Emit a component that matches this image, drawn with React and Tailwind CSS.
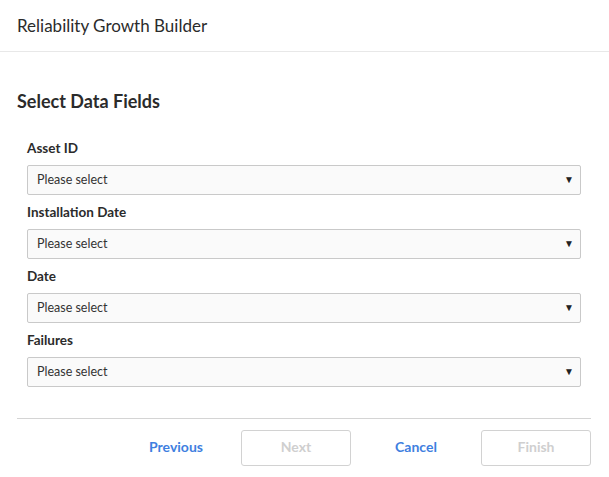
import React from 'react';

const fields = ['Asset ID', 'Installation Date', 'Date', 'Failures'];

function SelectField({ label }) {
  return (
    <div className="flex flex-col">
      <label className="h-[18px] text-[13.5px] leading-[18px] font-bold text-[#2b2b2b]">{label}</label>
      <div className="mt-[8px] flex h-[30px] items-center justify-between rounded-[2px] border border-[#c9c9c9] bg-[#fafafa] pl-[9px] pr-[6px]">
        <span className="text-[12.5px] text-[#333]">Please select</span>
        <span className="pb-[2px] text-[10px] leading-none text-[#222]">▼</span>
      </div>
    </div>
  );
}

export default function App() {
  return (
    <div className="h-[477px] w-[609px] bg-white text-[#333]" style={{ fontFamily: 'Lato, "Noto Sans", sans-serif' }}>
      <header className="flex h-[52px] items-center border-b border-[#e8e8e8] px-[17px]">
        <h1 className="text-[17px] text-[#2b2b2b]">Reliability Growth Builder</h1>
      </header>

      <div className="px-[17px]">
        <h2 className="mt-[38px] text-[18px] font-bold leading-[22px] text-[#2b2b2b]">Select Data Fields</h2>

        <div className="mt-[27px] flex flex-col gap-[8px] pl-[10px] pr-[11px]">
          {fields.map((f) => (
            <SelectField key={f} label={f} />
          ))}
        </div>

        <div className="mt-[31px] mr-[1px] border-t border-[#d4d4d4]" />

        <div className="mt-[11px] mr-[1px] flex justify-end gap-[10px]">
          <button type="button" className="h-[36px] w-[110px] pb-[3px] text-[14px] font-bold text-[#3f7fe0]">
            Previous
          </button>
          <button type="button" disabled className="h-[36px] w-[110px] rounded-[3px] border border-[#d2d2d2] pb-[3px] text-[14px] font-bold text-[#cfcfcf]">
            Next
          </button>
          <button type="button" className="h-[36px] w-[110px] pb-[3px] text-[14px] font-bold text-[#3f7fe0]">
            Cancel
          </button>
          <button type="button" disabled className="h-[36px] w-[110px] rounded-[3px] border border-[#d2d2d2] pb-[3px] text-[14px] font-bold text-[#cfcfcf]">
            Finish
          </button>
        </div>
      </div>
    </div>
  );
}
